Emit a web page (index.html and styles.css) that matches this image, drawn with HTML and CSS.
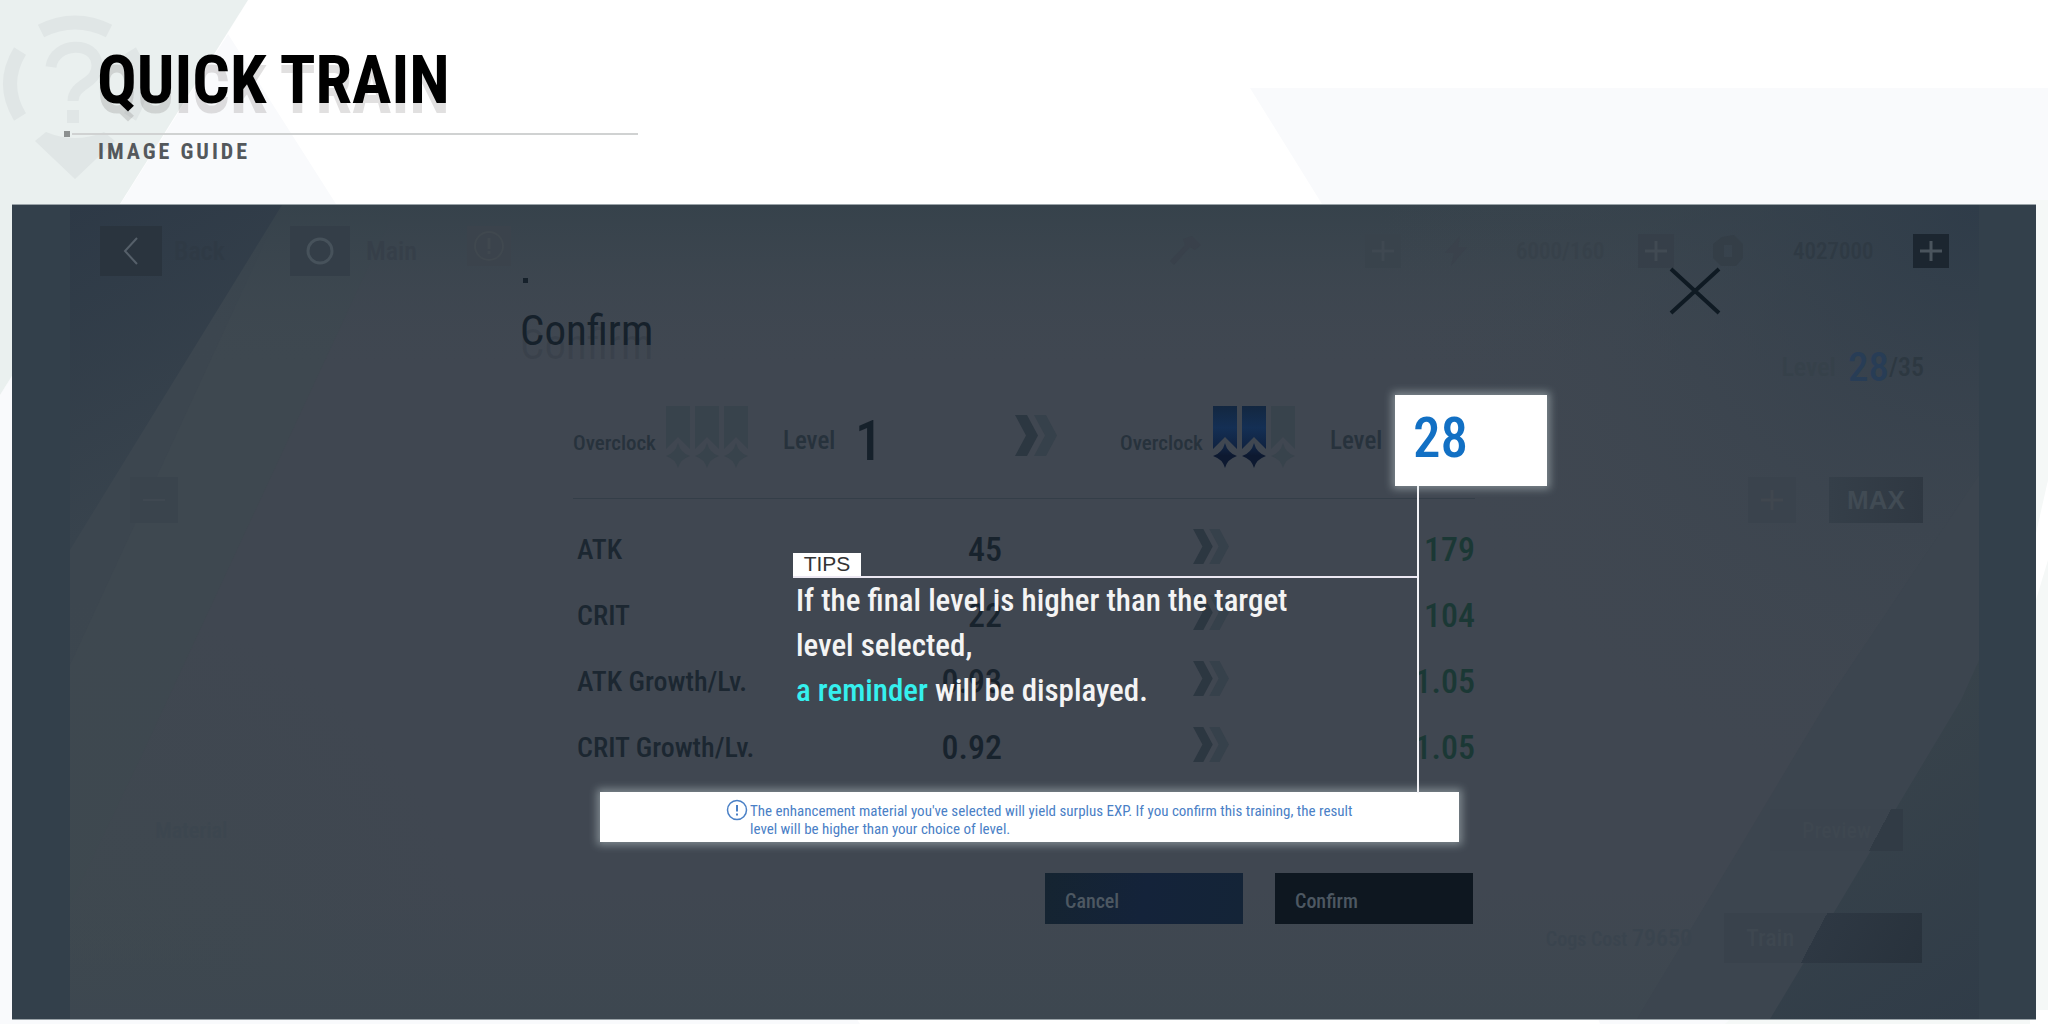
FILE: index.html
```html
<!DOCTYPE html>
<html lang="en">
<head>
<meta charset="utf-8">
<title>Quick Train</title>
<meta name="viewport" content="width=device-width, initial-scale=1">
<link rel="stylesheet" href="styles.css">
</head>
<body>
<svg class="defs" width="0" height="0" aria-hidden="true">
  <defs><linearGradient id="rank-fill" x1="0" y1="0" x2="0" y2="1"><stop offset="0" stop-color="#132740"/><stop offset=".35" stop-color="#142f54"/><stop offset=".65" stop-color="#102342"/><stop offset=".8" stop-color="#0d1930"/></linearGradient></defs>
  <symbol id="rank" viewBox="0 0 24 62"><path d="M0 0H24V43L12 31L0 43ZM12 37Q14.500 47 24 50Q14.500 53 12 62Q9.500 53 0 50Q9.500 47 12 37Z"/></symbol>
  <symbol id="chevrons" viewBox="0 0 42 41"><path class="chev-back" d="M19 0H31L42 20.500L31 41H19L30 20.500Z"/><path class="chev-front" d="M0 0H12L23 20.500L12 41H0L11 20.500Z"/></symbol>
  <symbol id="plus" viewBox="0 0 36 34"><path d="M7 17H29M18 7V27" fill="none" stroke="currentColor" stroke-width="3"/></symbol>
</svg>

<div class="page">
  <svg class="page-art" viewBox="0 0 2048 1024" preserveAspectRatio="none" aria-hidden="true">
    <path fill="#f9fafc" d="M228 34L336 204L860 1024H0V395Z"/>
    <path fill="#eaf0ef" d="M0 0H248L120 204L0 395Z"/>
    <path fill="#f9fafc" d="M1250 88H2048V480L2030 540V1024H1600L1322 204Z"/>
    <path fill="#f5f8f7" d="M2048 200V480L2030 560V200ZM1725 1024L1740 1010H2048V560L2030 620V1024Z"/>
  </svg>

  <header class="guide-header">
    <svg class="help-mark" viewBox="0 0 150 182" aria-hidden="true">
      <g fill="none" stroke="#e0e6e6">
        <path stroke-width="14" d="M41 31Q75 14 109 31"/>
        <path stroke-width="14" d="M20 51Q0 84 20 117M130 51Q150 84 130 117"/>
        <path stroke-width="11" d="M51 67C54 42 96 40 97 65C98 84 73 83 73 101"/>
      </g>
      <path fill="#e0e6e6" d="M67 110H79V123H67ZM35 141L46 132Q75 144 104 132L115 141L75 179Z"/>
    </svg>
    <h1 class="guide-title">QUICK TRAIN</h1>
    <div class="guide-rule"></div>
    <p class="guide-sub">IMAGE GUIDE</p>
  </header>

  <main class="stage">
    <svg class="stage-art" viewBox="0 0 2024 814" preserveAspectRatio="none" aria-hidden="true">
      <defs>
        <linearGradient id="tl" gradientUnits="userSpaceOnUse" x1="58" y1="0" x2="200" y2="260"><stop offset="0" stop-color="#2d3946"/><stop offset="1" stop-color="#38434d"/></linearGradient>
        <linearGradient id="top" x1="0" y1="0" x2="0" y2="1"><stop offset="0" stop-color="#36424b"/><stop offset="1" stop-color="#3d4750" stop-opacity="0"/></linearGradient>
        <linearGradient id="bottom" x1="0" y1="0" x2="0" y2="1"><stop offset="0" stop-color="#3e4850" stop-opacity="0"/><stop offset="1" stop-color="#3d4750"/></linearGradient>
        <radialGradient id="tr" gradientUnits="userSpaceOnUse" cx="1967" cy="0" r="600"><stop offset="0" stop-color="#2f3c49"/><stop offset="1" stop-color="#3e4850" stop-opacity="0"/></radialGradient>
        <radialGradient id="bl" gradientUnits="userSpaceOnUse" cx="58" cy="814" r="420"><stop offset="0" stop-color="#3e494f"/><stop offset="1" stop-color="#3e484f" stop-opacity="0"/></radialGradient>
        <linearGradient id="br" gradientUnits="userSpaceOnUse" x1="1800" y1="560" x2="1967" y2="814"><stop offset="0" stop-color="#38434b"/><stop offset="1" stop-color="#303c48"/></linearGradient>
      </defs>
      <path fill="#404751" d="M0 0H2024V814H0Z"/>
      <path fill="#3e4850" d="M58 0H385L130 550L58 700Z"/>
      <path fill="#3c464f" d="M58 0H270L58 460Z"/>
      <path fill="url(#top)" d="M58 0H1967V160H58Z"/>
      <path fill="url(#tl)" d="M58 0H270L58 345Z"/>
      <path fill="url(#bl)" d="M58 394H478V814H58Z"/>
      <path fill="url(#bottom)" d="M58 680H1967V814H58Z"/>
      <path fill="url(#tr)" d="M1367 0H1967V600H1367Z"/>
      <path fill="#3c454f" d="M1816 495L1967 270V814H1625Z"/>
      <path fill="url(#br)" d="M1949 495L1967 455V814H1758Z"/>
      <path fill="#33404b" d="M0 0H58V814H0ZM1967 0H2024V814H1967Z"/>
    </svg>

    <section class="game" aria-label="Training screen">
      <div class="topbar">
        <button class="nav-btn nav-btn-back" aria-label="Back"><svg width="20" height="30" viewBox="0 0 20 30"><path d="M16 2L4 15L16 28" fill="none" stroke="currentColor" stroke-width="2"/></svg></button>
        <span class="nav-label">Back</span>
        <button class="nav-btn" aria-label="Main"><svg width="30" height="30" viewBox="0 0 30 30"><circle cx="15" cy="15" r="12" fill="none" stroke="currentColor" stroke-width="3"/></svg></button>
        <span class="nav-label nav-label-main">Main</span>
        <button class="info-btn" aria-label="Info"><svg width="36" height="30" viewBox="0 0 36 30"><circle cx="18" cy="15" r="14" fill="none" stroke="currentColor" stroke-width="2"/><path d="M18 7V18M18 20V23" stroke="currentColor" stroke-width="3"/></svg></button>
        <div class="funds">
          <svg class="fund-icon" viewBox="0 0 32 32"><path fill="currentColor" d="M4 30L0 26L15 10L13 4L22 1L31 10L25 15L20 12Z"/></svg>
          <span class="fund-gap"></span>
          <button class="add add-faint" aria-label="Add"><svg viewBox="0 0 36 34"><use href="#plus"/></svg></button>
          <svg class="fund-icon fund-icon-bolt" viewBox="0 0 32 32"><path fill="currentColor" d="M20 1L5 18H14L11 31L27 12H18Z"/></svg>
          <span class="fund-value fund-value-faint">6000/160</span>
          <button class="add add-mid" aria-label="Add"><svg viewBox="0 0 36 34"><use href="#plus"/></svg></button>
          <svg class="fund-icon fund-icon-coin" viewBox="0 0 32 32"><path fill="currentColor" fill-rule="evenodd" d="M10 2L22 0L31 9V23L24 31H9L1 23V9ZM12 10H20V22H12Z"/></svg>
          <span class="fund-value">4027000</span>
          <button class="add" aria-label="Add"><svg viewBox="0 0 36 34"><use href="#plus"/></svg></button>
        </div>
      </div>
      <div class="level-row"><span class="level-word">Level</span><span class="level-now">28</span><span class="level-max">/35</span></div>
      <div class="step-row">
        <button class="step step-minus" aria-label="Decrease"><svg viewBox="0 0 36 34"><path d="M7 17H29" stroke="currentColor" stroke-width="2"/></svg></button>
        <button class="step" aria-label="Increase"><svg viewBox="0 0 36 34"><use href="#plus"/></svg></button>
        <button class="max">MAX</button>
      </div>
      <div class="material-row"><span>Material</span><button class="preview">Preview</button></div>
      <div class="train-row"><span class="cost">Cogs Cost <b>79650</b></span><button class="train">Train</button></div>
    </section>

    <section class="dialog" role="dialog" aria-labelledby="dialog-title">
      <button class="close" aria-label="Close"><svg width="52" height="48" viewBox="0 0 52 48"><path d="M2 2L50 46M50 2L2 46" fill="none" stroke="currentColor" stroke-width="4"/></svg></button>
      <div class="dot"></div>
      <h2 class="dialog-title" id="dialog-title">Confirm</h2>

      <div class="compare">
        <div class="state">
          <span class="oc">Overclock</span>
          <span class="ranks"><svg class="rank"><use href="#rank"/></svg><svg class="rank"><use href="#rank"/></svg><svg class="rank"><use href="#rank"/></svg></span>
          <span class="lv">Level</span><b class="lv-from">1</b>
        </div>
        <svg class="chevrons chevrons-big"><use href="#chevrons"/></svg>
        <div class="state">
          <span class="oc">Overclock</span>
          <span class="ranks"><svg class="rank rank-on"><use href="#rank"/></svg><svg class="rank rank-on"><use href="#rank"/></svg><svg class="rank"><use href="#rank"/></svg></span>
          <span class="lv">Level</span><span class="lv-to">28</span>
        </div>
      </div>

      <table class="stats">
        <colgroup><col class="c-name"><col class="c-from"><col class="c-arrow"><col class="c-to"></colgroup>
        <tbody>
        <tr><th scope="row">ATK</th><td>45</td><td class="arrow"><svg class="chevrons"><use href="#chevrons"/></svg></td><td class="gain">179</td></tr>
        <tr><th scope="row">CRIT</th><td>22</td><td class="arrow"><svg class="chevrons"><use href="#chevrons"/></svg></td><td class="gain">104</td></tr>
        <tr><th scope="row">ATK Growth/Lv.</th><td>0.93</td><td class="arrow"><svg class="chevrons"><use href="#chevrons"/></svg></td><td class="gain">1.05</td></tr>
        <tr><th scope="row">CRIT Growth/Lv.</th><td>0.92</td><td class="arrow"><svg class="chevrons"><use href="#chevrons"/></svg></td><td class="gain">1.05</td></tr>
        </tbody>
      </table>

      <div class="notice">
        <svg class="notice-icon" viewBox="0 0 22 22"><circle cx="11" cy="11" r="9.500" fill="none" stroke="currentColor" stroke-width="1.500"/><path d="M11 6V12.500M11 14.500V16.500" stroke="currentColor" stroke-width="2"/></svg>
        <p>The enhancement material you've selected will yield surplus EXP. If you confirm this training, the result<br>level will be higher than your choice of level.</p>
      </div>

      <div class="actions">
        <button class="action action-cancel">Cancel</button>
        <button class="action action-confirm">Confirm</button>
      </div>

      <div class="leader"></div>
      <aside class="tips">
        <div class="tips-head"><span class="tips-label">TIPS</span></div>
        <p class="tips-text">If the final level is higher than the target<br>level selected,<br><em>a reminder</em> will be displayed.</p>
      </aside>
    </section>
  </main>
</div>
</body>
</html>
```
FILE: styles.css
```css
* { box-sizing: border-box; }
body { margin: 0; background: #fff; font-family: "Roboto Condensed", "Liberation Sans Narrow", "Liberation Sans", sans-serif; font-weight: 500; }
h1, h2, p { margin: 0; }
button { border: 0; padding: 0; background: none; font: inherit; color: inherit; display: flex; align-items: center; justify-content: center; }
.defs { display: block; }

.page { display: grid; grid-template-rows: 204px auto; min-height: 100vh; padding-bottom: 4px; }
.page-art { position: absolute; inset: 0; z-index: -1; width: 100%; height: 100%; }

/* Header */
.guide-header { grid-area: 1 / 1; position: relative; padding: 42px 64px 0; }
.help-mark { position: absolute; left: 0; top: 0; width: 150px; height: 182px; z-index: -1; }
.guide-title { padding-left: 33px; height: 76px; font-size: 66px; line-height: 78px; font-weight: 700; color: #000; text-shadow: 0 10px 0 rgba(70, 60, 60, .16); white-space: nowrap; }
.guide-rule { display: flex; align-items: center; gap: 2px; margin-top: 13px; width: 574px; height: 6px; }
.guide-rule::before { content: ""; width: 6px; height: 6px; background: #8c9090; }
.guide-rule::after { content: ""; flex: 1; height: 2px; background: #d0d2d2; }
.guide-sub { padding: 3px 0 0 34px; font-size: 22px; line-height: 24px; font-weight: 700; letter-spacing: 3px; color: #54585c; }

/* Stage: art, game screen and dialog share one cell */
.stage { grid-area: 2 / 1; display: grid; margin: 0 12px; border: 1px solid #9aa3a8; border-width: 1px 0; overflow: hidden; }
.stage > * { grid-area: 1 / 1; }
.stage-art { width: 100%; height: 100%; min-height: 0; }

.game { padding: 21px 87px 56px 88px; color: #353f48; }
.topbar { display: flex; align-items: center; height: 50px; }
.nav-btn { width: 60px; height: 50px; background: #343e48; color: #47525b; }
.nav-btn-back { width: 62px; background: #2a343e; color: #56606a; }
.nav-label { width: 128px; padding-left: 12px; font-size: 26px; color: #2f3a45; }
.nav-label-main { width: 117px; padding-left: 16px; color: #363f49; }
.info-btn { width: 44px; height: 40px; background: #3b434c; color: #40484f; margin-bottom: 10px; }
.funds { display: flex; align-items: center; margin-left: auto; }
.fund-icon { width: 32px; height: 32px; color: #39414b; }
.fund-gap { width: 163px; }
.fund-icon-bolt { margin: 0 44px 0 39px; color: #3a424c; }
.fund-icon-coin { margin: 0 49px 0 38px; color: #343e47; }
.fund-value { width: 120px; font-size: 23px; color: #2f3a44; }
.fund-value-faint { width: 122px; color: #37414a; }
.add { width: 36px; height: 34px; background: #1c2630; color: #4a545d; }
.add svg, .step svg { width: 36px; height: 34px; }
.add-faint { background: #39434c; color: #3f4851; }
.add-mid { background: #363f49; color: #414a53; }

.level-row { display: flex; align-items: center; justify-content: flex-end; height: 36px; margin: 73px 25px 0 0; }
.level-word { margin-right: 12px; font-size: 26px; color: #36414a; }
.level-now { font-size: 41px; line-height: 36px; color: #283d56; }
.level-max { font-size: 26px; color: #2d3841; }
.step-row { display: flex; margin: 92px 26px 0 30px; height: 46px; }
.step { width: 48px; height: 46px; background: #3a434d; color: #40474f; }
.step-minus { background: #3a444d; color: #3f4851; margin-right: auto; }
.max { width: 94px; margin-left: 33px; background: linear-gradient(90deg, #353f49, #2f3842); color: #414b54; font-family: "Liberation Sans", sans-serif; font-weight: 700; font-size: 26px; }
.material-row { display: flex; justify-content: space-between; align-items: center; margin: 286px 46px 0 55px; height: 42px; font-size: 22px; color: #3c464f; }
.preview { width: 133px; height: 42px; background: linear-gradient(118deg, #3b444e 78%, #313b45 78%); color: #3e4750; font-size: 22px; }
.train-row { display: flex; justify-content: flex-end; align-items: center; margin: 62px 27px 0 0; height: 50px; font-size: 20px; }
.cost { margin-right: 32px; color: #3a444e; }
.cost b { font-size: 24px; font-weight: 500; }
.train { width: 198px; height: 50px; padding-left: 22px; justify-content: flex-start; background: linear-gradient(118deg, #39424c 46%, #2e3843 46%, #28323c); color: #3e4750; font-size: 24px; }

/* Dialog */
.dialog { position: relative; width: 1004px; max-width: 100%; margin: 0 auto; padding-top: 73px; color: #16212b; }
.close { position: absolute; left: 1147px; top: 62px; color: #0f1a23; }
.dot { width: 5px; height: 5px; margin-left: 1px; background: #16212b; }
.dialog-title { margin: 23px 0 0 -2px; height: 48px; font-size: 43px; line-height: 48px; font-weight: 400; text-shadow: 0 14px 0 rgba(20, 30, 40, .13); }
.compare { display: grid; grid-template-columns: 442fr 105fr 427fr; align-items: center; height: 91px; margin: 41px -21px 0 51px; }
.state { display: flex; align-items: center; height: 91px; }
.oc { width: 93px; padding-top: 4px; font-size: 21px; color: #27323c; }
.ranks { display: flex; gap: 5px; margin-bottom: 8px; }
.rank { width: 24px; height: 62px; fill: #38434c; }
.rank-on { fill: url(#rank-fill); }
.lv { width: 72px; margin-left: 35px; font-size: 25px; color: #27323c; }
.lv-from { font-size: 55px; line-height: 60px; font-weight: 500; }
.lv-to { position: relative; z-index: 1; margin-left: -7px; flex: none; width: 152px; height: 91px; padding-left: 18px; background: #fff; color: #1270c4; font-size: 55px; line-height: 87px; box-shadow: 0 0 8px 3px rgba(225, 240, 240, .4); }
.chevrons { width: 36px; height: 35px; }
.chevrons-big { width: 42px; height: 41px; margin-bottom: 10px; }
.chev-front { fill: #2c3741; }
.chev-back { fill: #36414b; }

.stats { width: 902px; max-width: 100%; margin: 12px 51px 0; border-top: 1px solid #343e48; border-spacing: 0; border-collapse: separate; table-layout: fixed; padding-top: 17px; }
.c-name { width: 300px; }
.c-from { width: 129px; }
.c-arrow { width: 400px; }
.c-to { width: 73px; }
.stats tr { height: 66px; }
.stats th { padding: 0 0 0 4px; text-align: left; font-size: 28px; font-weight: 500; color: #1c2731; white-space: nowrap; }
.stats td { padding: 0; text-align: right; font-size: 34px; color: #18232d; }
.stats .arrow { padding: 0 0 6px 17px; text-align: center; line-height: 0; }
.stats .gain { color: #1b3835; }

.notice { display: flex; width: 859px; max-width: 100%; height: 50px; margin: 12px 0 0 78px; padding: 7px 0 0 126px; background: #fff; color: #4a80c6; box-shadow: 0 0 8px 3px rgba(225, 240, 240, .4); font-size: 15px; line-height: 18px; font-weight: 400; }
.notice-icon { width: 22px; height: 22px; margin-right: 2px; flex: none; }
.notice p { padding-top: 3px; white-space: nowrap; }
.actions { display: flex; justify-content: flex-end; gap: 32px; margin: 31px 53px 0 0; }
.action { width: 198px; height: 51px; padding: 4px 20px 0; justify-content: flex-start; font-size: 20px; color: #4d5862; }
.action-cancel { background: linear-gradient(100deg, #152431, #14233a 50%, #142437); }
.action-confirm { background: #0e1720; }

/* Callout drawn across the dialog */
.leader { position: absolute; left: 895px; top: 280px; width: 2px; height: 308px; background: #f2f2f6; }
.tips { position: absolute; left: 271px; top: 348px; width: 624px; }
.tips-head { display: flex; border-bottom: 2px solid #ece8f2; height: 25px; }
.tips-label { width: 68px; background: #fff; color: #333; font: 21px/21px "Liberation Sans", sans-serif; text-align: center; }
.tips-text { padding: 0 0 0 3px; font-size: 31px; line-height: 45px; color: #f4f4f4; white-space: nowrap; }
.tips-text em { font-style: normal; color: #35f0ee; }
```
